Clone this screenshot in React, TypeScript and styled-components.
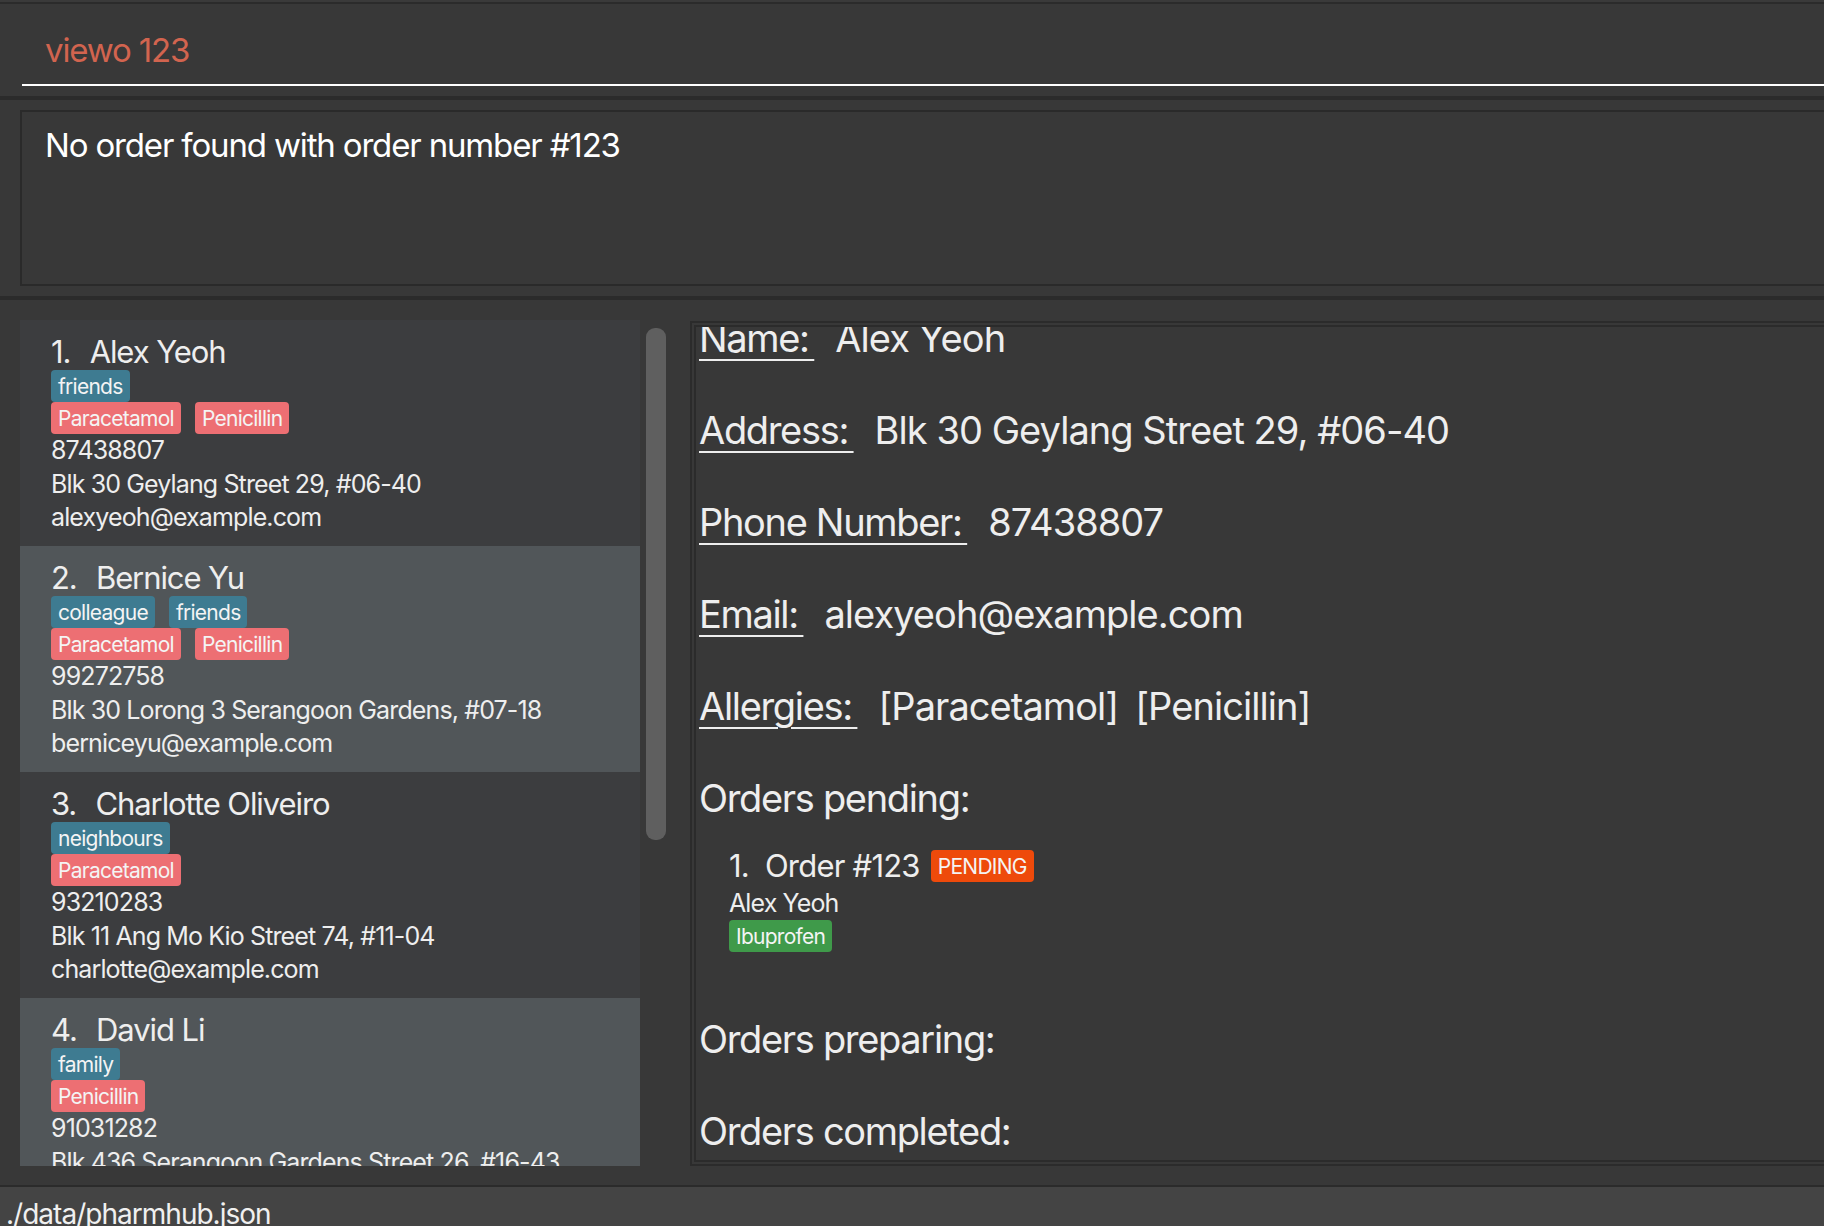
import React from "react";
import styled, { createGlobalStyle } from "styled-components";

const Global = createGlobalStyle`
  html, body { margin: 0; padding: 0; background: #383838; overflow: hidden; }
  body { font-family: Inter, "Noto Sans", sans-serif; }
  * { box-sizing: border-box; letter-spacing: -0.035em; }
`;

const Window = styled.div`
  width: 100%;
  height: 100vh;
  display: flex;
  flex-direction: column;
  background: #383838;
  overflow: hidden;
`;

const TopEdge = styled.div`
  flex: none;
  height: 4px;
  background: #2b2b2b;
  border-top: 2px solid #3a3a3a;
`;

const CommandSection = styled.div`
  flex: none;
  height: 92px;
  padding-left: 22px;
`;

const CommandField = styled.div`
  height: 82px;
  border-bottom: 2px solid #ffffff;
  padding: 29px 0 0 23px;
  font-size: 33px;
  line-height: 34px;
  color: #d2644f;
  white-space: nowrap;
`;

const Divider = styled.div`
  flex: none;
  height: 4px;
  background: #2b2b2b;
`;

const ResultSection = styled.div`
  flex: none;
  height: 196px;
  padding: 10px 0 10px 20px;
`;

const ResultBox = styled.div`
  height: 176px;
  border: 2px solid #2a2a2a;
  border-right: none;
  padding: 16px 0 0 23px;
  font-size: 33px;
  line-height: 34px;
  color: #ffffff;
  white-space: nowrap;
`;

const Main = styled.div`
  flex: 1;
  min-height: 0;
  display: flex;
  gap: 24px;
  padding: 20px 0 19px 20px;
`;

const ListPane = styled.div`
  flex: none;
  display: flex;
  gap: 6px;
  height: 100%;
`;

const CardList = styled.div`
  width: 620px;
  height: 100%;
  overflow: hidden;
  display: flex;
  flex-direction: column;
`;

const ScrollTrack = styled.div`
  width: 20px;
  padding-top: 8px;
`;

const ScrollThumb = styled.div`
  height: 512px;
  border-radius: 9px;
  background: #5f5f5f;
`;

const Card = styled.div<{ $alt: boolean }>`
  flex: none;
  height: 226px;
  padding: 13px 0 0 31px;
  background: ${(p) => (p.$alt ? "#515659" : "#3c3d3f")};
  color: #eeeeee;
  white-space: nowrap;
`;

const CardName = styled.div`
  font-size: 31px;
  line-height: 37px;
  white-space: pre;
`;

const Index = styled.span`
  margin-right: 4px;
`;

const TagRow = styled.div`
  display: flex;
  gap: 14px;
  height: 32px;
`;

const Tag = styled.span<{ $bg: string }>`
  display: inline-block;
  height: 32px;
  padding: 0 7px;
  border-radius: 4px;
  background: ${(p) => p.$bg};
  color: #f4f4f4;
  font-size: 21px;
  line-height: 33px;
  white-space: nowrap;
`;

const CardLine = styled.div`
  font-size: 25px;
  line-height: 33.5px;
`;

const DetailOuter = styled.div`
  flex: 1;
  min-width: 0;
  margin-top: 1px;
  border: 2px solid #2b2b2b;
  border-right: none;
  padding: 2px 0 2px 2px;
`;

const DetailInner = styled.div`
  height: 100%;
  border: 2px solid #2b2b2b;
  border-right: none;
  overflow: hidden;
  color: #eeeeee;
`;

const DetailBody = styled.div`
  margin-top: -12px;
  padding-left: 3px;
  white-space: nowrap;
`;

const FieldRow = styled.div`
  font-size: 38px;
  line-height: 46px;
  margin-bottom: 46px;
`;

const FieldLabel = styled.span`
  text-decoration: underline;
  text-decoration-thickness: 2px;
  text-underline-offset: 7px;
  white-space: pre;
`;

const FieldValue = styled.span`
  margin-left: 21px;
  letter-spacing: -0.025em;
`;

const Allergy = styled.span`
  margin-right: 17px;
  letter-spacing: -0.025em;
`;

const SectionTitle = styled.div<{ $gapAfter?: number }>`
  font-size: 38px;
  line-height: 46px;
  margin-bottom: ${(p) => p.$gapAfter ?? 0}px;
`;

const OrderList = styled.div`
  margin: 29px 0 64px 30px;
`;

const OrderHead = styled.div`
  display: flex;
  align-items: center;
  gap: 11px;
  height: 32px;
`;

const OrderTitle = styled.span`
  font-size: 31px;
  line-height: 32px;
  white-space: pre;
  letter-spacing: -0.025em;
`;

const OrderPatient = styled.div`
  margin-top: 4px;
  font-size: 25px;
  line-height: 34px;
`;

const FooterLine = styled.div`
  flex: none;
  height: 2px;
  background: #2b2b2b;
`;

const Footer = styled.div`
  flex: none;
  height: 39px;
  overflow: hidden;
  background: #444444;
  padding: 12px 0 0 6px;
  font-size: 28px;
  line-height: 30px;
  color: #f0f0f0;
  white-space: nowrap;
`;

const BLUE = "#3e7b91";
const RED = "#ed6f73";

type Person = {
  name: string;
  tags: string[];
  allergies: string[];
  phone: string;
  address: string;
  email: string;
};

const people: Person[] = [
  { name: "Alex Yeoh", tags: ["friends"], allergies: ["Paracetamol", "Penicillin"], phone: "87438807", address: "Blk 30 Geylang Street 29, #06-40", email: "alexyeoh@example.com" },
  { name: "Bernice Yu", tags: ["colleague", "friends"], allergies: ["Paracetamol", "Penicillin"], phone: "99272758", address: "Blk 30 Lorong 3 Serangoon Gardens, #07-18", email: "berniceyu@example.com" },
  { name: "Charlotte Oliveiro", tags: ["neighbours"], allergies: ["Paracetamol"], phone: "93210283", address: "Blk 11 Ang Mo Kio Street 74, #11-04", email: "charlotte@example.com" },
  { name: "David Li", tags: ["family"], allergies: ["Penicillin"], phone: "91031282", address: "Blk 436 Serangoon Gardens Street 26, #16-43", email: "lidavid@example.com" },
];

function PersonCard({ p, index }: { p: Person; index: number }) {
  return (
    <Card $alt={index % 2 === 1}>
      <CardName>
        <Index>{`${index + 1}.  `}</Index>
        {p.name}
      </CardName>
      <TagRow>
        {p.tags.map((t) => (
          <Tag key={t} $bg={BLUE}>{t}</Tag>
        ))}
      </TagRow>
      <TagRow>
        {p.allergies.map((t) => (
          <Tag key={t} $bg={RED}>{t}</Tag>
        ))}
      </TagRow>
      <CardLine>{p.phone}</CardLine>
      <CardLine>{p.address}</CardLine>
      <CardLine>{p.email}</CardLine>
    </Card>
  );
}

export default function App() {
  const sel = people[0];
  return (
    <Window>
      <Global />
      <TopEdge />
      <CommandSection>
        <CommandField>viewo 123</CommandField>
      </CommandSection>
      <Divider />
      <ResultSection>
        <ResultBox>No order found with order number #123</ResultBox>
      </ResultSection>
      <Divider />
      <Main>
        <ListPane>
          <CardList>
            {people.map((p, i) => (
              <PersonCard key={p.name} p={p} index={i} />
            ))}
          </CardList>
          <ScrollTrack>
            <ScrollThumb />
          </ScrollTrack>
        </ListPane>
        <DetailOuter>
          <DetailInner>
            <DetailBody>
              <FieldRow>
                <FieldLabel>{"Name:\u2009"}</FieldLabel>
                <FieldValue>{sel.name}</FieldValue>
              </FieldRow>
              <FieldRow>
                <FieldLabel>{"Address:\u2009"}</FieldLabel>
                <FieldValue>{sel.address}</FieldValue>
              </FieldRow>
              <FieldRow>
                <FieldLabel>{"Phone Number:\u2009"}</FieldLabel>
                <FieldValue>{sel.phone}</FieldValue>
              </FieldRow>
              <FieldRow>
                <FieldLabel>{"Email:\u2009"}</FieldLabel>
                <FieldValue>{sel.email}</FieldValue>
              </FieldRow>
              <FieldRow>
                <FieldLabel>{"Allergies:\u2009"}</FieldLabel>
                <FieldValue>
                  {sel.allergies.map((a) => (
                    <Allergy key={a}>[{a}]</Allergy>
                  ))}
                </FieldValue>
              </FieldRow>
              <SectionTitle>Orders pending:</SectionTitle>
              <OrderList>
                <OrderHead>
                  <OrderTitle>{"1.  Order #123"}</OrderTitle>
                  <Tag $bg="#ee4a0b">PENDING</Tag>
                </OrderHead>
                <OrderPatient>Alex Yeoh</OrderPatient>
                <TagRow>
                  <Tag $bg="#3f9a4a">Ibuprofen</Tag>
                </TagRow>
              </OrderList>
              <SectionTitle $gapAfter={46}>Orders preparing:</SectionTitle>
              <SectionTitle>Orders completed:</SectionTitle>
            </DetailBody>
          </DetailInner>
        </DetailOuter>
      </Main>
      <FooterLine />
      <Footer>./data/pharmhub.json</Footer>
    </Window>
  );
}
